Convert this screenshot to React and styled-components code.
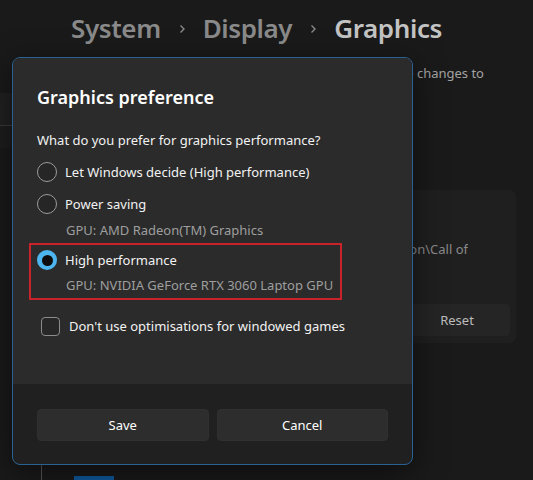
import styled, { createGlobalStyle } from "styled-components";

const GlobalStyle = createGlobalStyle`
  body {
    margin: 0;
    background: #1a1a1a;
    font-family: "Noto Sans", "Open Sans", sans-serif;
  }
`;

const Page = styled.div`
  position: relative;
  width: 533px;
  height: 480px;
  overflow: hidden;
  background: #1a1a1a;
  display: flex;
  flex-direction: column;
`;

const Header = styled.header`
  flex-shrink: 0;
  height: 57px;
  display: flex;
  align-items: center;
  padding: 0 0 0 71px;
  box-sizing: border-box;
`;

const Crumb = styled.span`
  font-size: 26px;
  letter-spacing: -0.4px;
  font-weight: 600;
  color: ${(p) => (p.$current ? "#c4c4c4" : "#8a8a8a")};
  line-height: 1;
  padding-bottom: 2px;
`;

const Chevron = styled.svg`
  width: 10px;
  height: 12px;
  margin: 0 16px;
  color: #8a8a8a;
`;

const Body = styled.div`
  flex: 1;
  min-height: 0;
  display: grid;
  grid-template-columns: 30px 1fr;
  align-items: start;
`;

const Nav = styled.nav`
  display: flex;
  flex-direction: column;
  padding-top: 36px;
`;

const NavItem = styled.div`
  height: ${(p) => p.$h}px;
  background: ${(p) => p.$bg};
  border-bottom: ${(p) => (p.$line ? "1px solid #3a3a3a" : "none")};
`;

const Main = styled.main`
  display: flex;
  flex-direction: column;
  padding-right: 17px;
`;

const Description = styled.p`
  margin: 6px 0 0;
  width: 454px;
  font-size: 13px;
  line-height: 20px;
  color: #a3a3a3;
  white-space: nowrap;
  overflow: hidden;
  direction: rtl;
`;

const Card = styled.section`
  flex-shrink: 0;
  margin-top: 107px;
  height: 153px;
  background: #1f1f1f;
  border-radius: 6px;
  box-sizing: border-box;
  padding: 49px 6px 7px 20px;
  display: flex;
  flex-direction: column;
`;

const PathText = styled.div`
  width: 418px;
  font-size: 13px;
  line-height: 20px;
  color: #8a8a8a;
  white-space: nowrap;
  overflow: hidden;
  direction: rtl;
`;

const CardActions = styled.div`
  margin-top: auto;
  display: flex;
  justify-content: flex-end;
`;

const GhostButton = styled.button`
  width: 106px;
  height: 32px;
  border: none;
  border-radius: 4px;
  background: #252525;
  color: #bcbcbc;
  font-family: inherit;
  font-size: 13px;
`;

const Tree = styled.div`
  flex-shrink: 0;
  margin: 122px 0 0 11px;
  border-left: 1px solid #5a5a5a;
  height: 40px;
  padding: 11px 0 0 32px;
`;

const AccentTile = styled.div`
  width: 40px;
  height: 30px;
  background: #0e5a9e;
`;

const Dialog = styled.div`
  position: absolute;
  left: 12px;
  top: 57px;
  width: 401px;
  height: 408px;
  box-sizing: border-box;
  border: 1px solid #2a6193;
  border-radius: 8px;
  overflow: hidden;
  display: flex;
  flex-direction: column;
  background: #202020;
  box-shadow: 0 8px 32px rgba(0, 0, 0, 0.5);
`;

const DialogContent = styled.div`
  height: 326px;
  flex-shrink: 0;
  background: #2b2b2b;
  padding: 25px 24px 0 24px;
  box-sizing: border-box;
  display: flex;
  flex-direction: column;
`;

const Title = styled.h2`
  margin: 0;
  font-size: 18px;
  line-height: 28px;
  font-weight: 600;
  color: #ffffff;
`;

const Question = styled.p`
  margin: 19px 0 6px;
  font-size: 13px;
  line-height: 20px;
  color: #f2f2f2;
`;

const Option = styled.label`
  display: flex;
  align-items: center;
  gap: 8px;
  height: ${(p) => (p.$compact ? 30 : 32)}px;
  font-size: 13px;
  color: #f2f2f2;
  white-space: nowrap;
`;

const RadioCircle = styled.span`
  width: 20px;
  height: 20px;
  border-radius: 50%;
  box-sizing: border-box;
  flex-shrink: 0;
  display: flex;
  align-items: center;
  justify-content: center;
  border: ${(p) => (p.$checked ? "none" : "1px solid #9b9b9b")};
  background: ${(p) => (p.$checked ? "#4db6ee" : "#262626")};

  &::after {
    content: "";
    display: ${(p) => (p.$checked ? "block" : "none")};
    width: 11px;
    height: 11px;
    border-radius: 50%;
    background: #0d0d0d;
  }
`;

const SubText = styled.div`
  padding-left: 29px;
  font-size: 13px;
  line-height: 20px;
  color: #9e9e9e;
  white-space: nowrap;
`;

const Highlight = styled.div`
  margin: 3px 0 0 -8px;
  width: 313px;
  box-sizing: border-box;
  border: 2px solid #c8222b;
  padding: 0 0 3px 6px;
`;

const CheckRow = styled.label`
  margin: 10px 0 0 4px;
  display: flex;
  align-items: center;
  gap: 9px;
  height: 32px;
  font-size: 13px;
  color: #f2f2f2;
  white-space: nowrap;
`;

const CheckBox = styled.span`
  width: 19px;
  height: 19px;
  box-sizing: border-box;
  border: 1px solid #8c8c8c;
  border-radius: 4px;
  background: #272727;
`;

const Footer = styled.div`
  flex: 1;
  display: flex;
  gap: 8px;
  padding: 25px 24px 0;
`;

const DialogButton = styled.button`
  flex: 1;
  height: 32px;
  border: 1px solid #303030;
  border-radius: 4px;
  background: #2d2d2d;
  color: #ffffff;
  font-family: inherit;
  font-size: 13px;
`;

function ChevronIcon() {
  return (
    <Chevron viewBox="0 0 10 12">
      <path d="M3.5 2.5 L7 6 L3.5 9.5" fill="none" stroke="currentColor" strokeWidth="1.4" />
    </Chevron>
  );
}

export default function App() {
  return (
    <Page>
      <GlobalStyle />
      <Header>
        <Crumb>System</Crumb>
        <ChevronIcon />
        <Crumb>Display</Crumb>
        <ChevronIcon />
        <Crumb $current>Graphics</Crumb>
      </Header>
      <Body>
        <Nav>
          <NavItem $h={32} $bg="#212121" $line />
          <NavItem $h={22} $bg="#1d1d1d" />
        </Nav>
        <Main>
          <Description>Restart the app after you make graphics preference changes to</Description>
          <Card>
            <PathText>C:\Program Files (x86)\Steam\steamapps\common\Activision\Call of</PathText>
            <CardActions>
              <GhostButton>Reset</GhostButton>
            </CardActions>
          </Card>
          <Tree>
            <AccentTile />
          </Tree>
        </Main>
      </Body>

      <Dialog>
        <DialogContent>
          <Title>Graphics preference</Title>
          <Question>What do you prefer for graphics performance?</Question>
          <Option>
            <RadioCircle />
            Let Windows decide (High performance)
          </Option>
          <Option>
            <RadioCircle />
            Power saving
          </Option>
          <SubText>GPU: AMD Radeon(TM) Graphics</SubText>
          <Highlight>
            <Option $compact>
              <RadioCircle $checked />
              High performance
            </Option>
            <SubText>GPU: NVIDIA GeForce RTX 3060 Laptop GPU</SubText>
          </Highlight>
          <CheckRow>
            <CheckBox />
            Don't use optimisations for windowed games
          </CheckRow>
        </DialogContent>
        <Footer>
          <DialogButton>Save</DialogButton>
          <DialogButton>Cancel</DialogButton>
        </Footer>
      </Dialog>
    </Page>
  );
}
